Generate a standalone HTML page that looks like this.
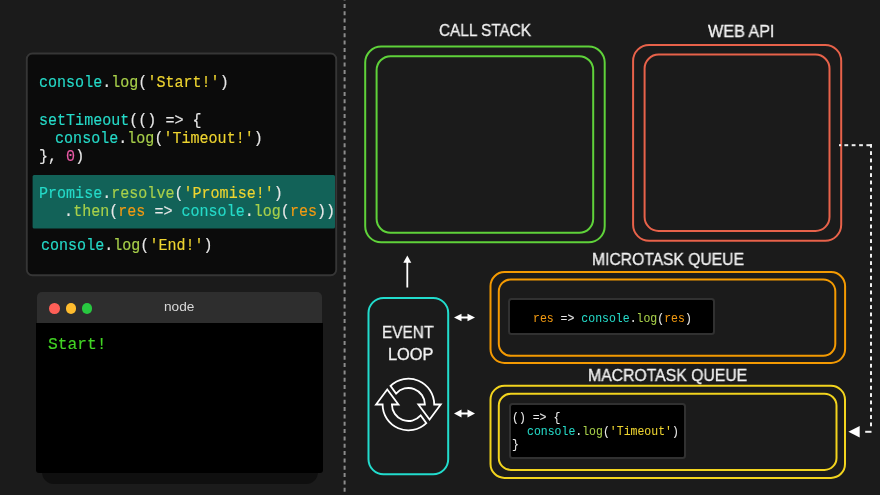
<!DOCTYPE html>
<html><head><meta charset="utf-8">
<style>
html,body{margin:0;padding:0;}
body{width:880px;height:495px;background:#1b1b1b;position:relative;overflow:hidden;font-family:"Liberation Sans",sans-serif;}
.abs{position:absolute;}
.mono{font-family:"Liberation Mono",monospace;white-space:pre;color:#e8e8e8;will-change:transform;-webkit-text-stroke-width:0.15px;}
.sans{font-family:"Liberation Sans",sans-serif;white-space:nowrap;will-change:transform;-webkit-text-stroke-width:0.3px;}
.t{color:#25dac8}.f{color:#a8d04a}.s{color:#eed430}.n{color:#ea5aa6}.r{color:#f29a12}
.term-shadow{left:42px;top:440px;width:275.5px;height:43.8px;background:#0f0f0f;border-radius:0 0 12px 12px;}
.term-bar{left:37.3px;top:291.8px;width:284.5px;height:31.2px;background:#2e2e2e;border-radius:5px 5px 0 0;}
.term-body{left:36.3px;top:322.9px;width:286.4px;height:149.7px;background:#000;border-radius:0 0 3px 3px;}
.dot{width:10.6px;height:10.6px;border-radius:50%;top:303.4px;}
.chip{background:#000;border:2px solid #313131;border-radius:3.5px;box-sizing:border-box;}
</style></head>
<body>
<svg class="abs" style="left:0;top:0" width="880" height="495">
  <line x1="344.6" y1="-3.4" x2="344.6" y2="495" stroke="#8c8c8c" stroke-width="2" stroke-dasharray="4 3.33"/>
</svg>
<svg class="abs" style="left:0;top:0" width="880" height="495">
  <rect x="26.8" y="53.5" width="309.4" height="221.8" rx="5.5" fill="#0b0b0b" stroke="#363636" stroke-width="1.9"/>
  <rect x="32.6" y="175" width="302.4" height="53.6" rx="1.5" fill="#126258"/>
</svg>
<div class="abs mono" style="left:38.9px;top:74.16px;font-size:15.05px;line-height:18.06px;transform:scaleY(1.12);transform-origin:0 13.04px;"><span class="t">console</span>.<span class="f">log</span>(<span class="s">'Start!'</span>)</div>
<div class="abs mono" style="left:38.9px;top:111.86px;font-size:15.05px;line-height:18.06px;transform:scaleY(1.12);transform-origin:0 13.04px;"><span class="t">setTimeout</span>(() =&gt; {</div>
<div class="abs mono" style="left:37.0px;top:129.86px;font-size:15.05px;line-height:18.06px;transform:scaleY(1.12);transform-origin:0 13.04px;">  <span class="t">console</span>.<span class="f">log</span>(<span class="s">'Timeout!'</span>)</div>
<div class="abs mono" style="left:38.9px;top:147.66px;font-size:15.05px;line-height:18.06px;transform:scaleY(1.12);transform-origin:0 13.04px;">}, <span class="n">0</span>)</div>
<div class="abs mono" style="left:38.9px;top:184.96px;font-size:15.05px;line-height:18.06px;transform:scaleY(1.12);transform-origin:0 13.04px;"><span class="t">Promise</span>.<span class="f">resolve</span>(<span class="s">'Promise!'</span>)</div>
<div class="abs mono" style="left:37.0px;top:202.86px;font-size:15.05px;line-height:18.06px;transform:scaleY(1.12);transform-origin:0 13.04px;">   .<span class="f">then</span>(<span class="r">res</span> =&gt; <span class="t">console</span>.<span class="f">log</span>(<span class="r">res</span>))</div>
<div class="abs mono" style="left:41.4px;top:236.86px;font-size:15.05px;line-height:18.06px;transform:scaleY(1.12);transform-origin:0 13.04px;"><span class="t">console</span>.<span class="f">log</span>(<span class="s">'End!'</span>)</div>

<div class="abs term-shadow"></div>
<div class="abs term-bar"></div>
<div class="abs term-body"></div>
<div class="abs dot" style="left:49.4px;background:#fe5f57"></div>
<div class="abs dot" style="left:65.6px;background:#febc2e"></div>
<div class="abs dot" style="left:81.7px;background:#28c840"></div>
<div class="abs mono" style="left:48.2px;top:334.70px;font-size:16.27px;line-height:19.52px;transform:scaleY(1.05);transform-origin:0 14.10px;color:#42d424;">Start!</div>

<svg class="abs" style="left:0;top:0" width="880" height="495">
  <rect x="365.2" y="46.5" width="239.5" height="195.8" rx="16" fill="none" stroke="#5fd23a" stroke-width="2"/>
  <rect x="376.6" y="56.2" width="216.6" height="176.6" rx="14" fill="none" stroke="#5fd23a" stroke-width="2"/>
  <rect x="633.1" y="44.9" width="208.1" height="195.9" rx="16" fill="none" stroke="#e8624a" stroke-width="2"/>
  <rect x="644.6" y="54.6" width="184.9" height="176.4" rx="14" fill="none" stroke="#e8624a" stroke-width="2"/>
  <rect x="490.5" y="272.1" width="354.6" height="90.9" rx="14" fill="none" stroke="#f49a02" stroke-width="2"/>
  <rect x="498.8" y="279.4" width="336.5" height="76.3" rx="12" fill="none" stroke="#f49a02" stroke-width="2"/>
  <rect x="490.5" y="385.8" width="354.5" height="92.1" rx="14" fill="none" stroke="#f2d41e" stroke-width="2"/>
  <rect x="498.8" y="393.8" width="337.7" height="76.1" rx="12" fill="none" stroke="#f2d41e" stroke-width="2"/>
  <rect x="368.5" y="298" width="79.7" height="176.3" rx="15" fill="none" stroke="#22dccd" stroke-width="2"/>
  <line x1="407.3" y1="262" x2="407.3" y2="287.5" stroke="#fff" stroke-width="1.8"/>
  <polygon points="407.3,255.6 403.3,262.7 411.3,262.7" fill="#fff"/>
  <g fill="#fff">
    <rect x="460" y="316.5" width="9" height="2"/>
    <polygon points="454,317.5 461.5,313.7 461.5,321.3"/>
    <polygon points="475,317.5 467.5,313.7 467.5,321.3"/>
    <rect x="460" y="412.5" width="9" height="2"/>
    <polygon points="454,413.5 461.5,409.6 461.5,417.4"/>
    <polygon points="475,413.5 467.5,409.6 467.5,417.4"/>
  </g>
  <g fill="none" stroke="#fff" stroke-width="1.8" stroke-linejoin="miter">
    <path d="M390.5,385.9 A25.8,25.8 0 0 1 434.2,404.5 L440.75,404.5 L429.55,419.5 L418.35,404.5 L424.9,404.5 A16.5,16.5 0 0 0 396.06,393.55 Z"/>
    <path d="M426.3,423.1 A25.8,25.8 0 0 1 382.6,404.5 L376.05,404.5 L387.25,389.5 L398.45,404.5 L391.9,404.5 A16.5,16.5 0 0 0 420.74,415.45 Z"/>
  </g>
<g fill="#f0f0f0"><rect x="839" y="144.2" width="2.10" height="2"/><rect x="844.4" y="144.2" width="3.80" height="2"/><rect x="851.7" y="144.2" width="3.80" height="2"/><rect x="859.1" y="144.2" width="3.80" height="2"/><rect x="866.4" y="144.2" width="5.60" height="2"/><rect x="870" y="144.2" width="2" height="3.5"/><rect x="870" y="151.20" width="2" height="3.8"/><rect x="870" y="158.53" width="2" height="3.8"/><rect x="870" y="165.86" width="2" height="3.8"/><rect x="870" y="173.20" width="2" height="3.8"/><rect x="870" y="180.53" width="2" height="3.8"/><rect x="870" y="187.86" width="2" height="3.8"/><rect x="870" y="195.19" width="2" height="3.8"/><rect x="870" y="202.52" width="2" height="3.8"/><rect x="870" y="209.86" width="2" height="3.8"/><rect x="870" y="217.19" width="2" height="3.8"/><rect x="870" y="224.52" width="2" height="3.8"/><rect x="870" y="231.85" width="2" height="3.8"/><rect x="870" y="239.18" width="2" height="3.8"/><rect x="870" y="246.52" width="2" height="3.8"/><rect x="870" y="253.85" width="2" height="3.8"/><rect x="870" y="261.18" width="2" height="3.8"/><rect x="870" y="268.51" width="2" height="3.8"/><rect x="870" y="275.84" width="2" height="3.8"/><rect x="870" y="283.18" width="2" height="3.8"/><rect x="870" y="290.51" width="2" height="3.8"/><rect x="870" y="297.84" width="2" height="3.8"/><rect x="870" y="305.17" width="2" height="3.8"/><rect x="870" y="312.50" width="2" height="3.8"/><rect x="870" y="319.84" width="2" height="3.8"/><rect x="870" y="327.17" width="2" height="3.8"/><rect x="870" y="334.50" width="2" height="3.8"/><rect x="870" y="341.83" width="2" height="3.8"/><rect x="870" y="349.16" width="2" height="3.8"/><rect x="870" y="356.50" width="2" height="3.8"/><rect x="870" y="363.83" width="2" height="3.8"/><rect x="870" y="371.16" width="2" height="3.8"/><rect x="870" y="378.49" width="2" height="3.8"/><rect x="870" y="385.82" width="2" height="3.8"/><rect x="870" y="393.16" width="2" height="3.8"/><rect x="870" y="400.49" width="2" height="3.8"/><rect x="870" y="407.82" width="2" height="3.8"/><rect x="870" y="415.15" width="2" height="3.8"/><rect x="870" y="422.48" width="2" height="3.8"/><rect x="865.2" y="430.8" width="6.3" height="2"/></g>
  <polygon points="848.4,431.8 859.7,426 859.7,437.6" fill="#fff"/>
</svg>
<div class="abs chip" style="left:508.2px;top:298.3px;width:207px;height:37.1px;"></div>
<div class="abs chip" style="left:508.5px;top:403.2px;width:177px;height:56.2px;"></div>
<div class="abs mono" style="left:533.3px;top:312.13px;font-size:11.5px;line-height:13.8px;transform:scaleY(1.12);transform-origin:0 9.97px;-webkit-text-stroke-width:0.05px;"><span class="r">res</span> =&gt; <span class="t">console</span>.<span class="f">log</span>(<span class="r">res</span>)</div>
<div class="abs mono" style="left:511.5px;top:411.43px;font-size:11.5px;line-height:13.8px;transform:scaleY(1.12);transform-origin:0 9.97px;-webkit-text-stroke-width:0.05px;">() =&gt; {</div>
<div class="abs mono" style="left:527.3px;top:425.43px;font-size:11.5px;line-height:13.8px;transform:scaleY(1.12);transform-origin:0 9.97px;-webkit-text-stroke-width:0.05px;"><span class="t">console</span>.<span class="f">log</span>(<span class="s">'Timeout'</span>)</div>
<div class="abs mono" style="left:511.5px;top:437.53px;font-size:11.5px;line-height:13.8px;transform:scaleY(1.12);transform-origin:0 9.97px;-webkit-text-stroke-width:0.05px;">}</div>

<div class="abs sans" style="left:438.8px;top:20.28px;font-size:16.4px;line-height:20px;color:#f2f2f2;transform:scaleX(0.935);transform-origin:0 0;">CALL STACK</div>
<div class="abs sans" style="left:708.0px;top:20.58px;font-size:16.4px;line-height:20px;color:#f2f2f2;transform:scaleX(0.986);transform-origin:0 0;">WEB API</div>
<div class="abs sans" style="left:591.5px;top:248.98px;font-size:16.4px;line-height:20px;color:#f2f2f2;transform:scaleX(0.955);transform-origin:0 0;">MICROTASK QUEUE</div>
<div class="abs sans" style="left:588.0px;top:365.48px;font-size:16.4px;line-height:20px;color:#f2f2f2;transform:scaleX(0.962);transform-origin:0 0;">MACROTASK QUEUE</div>
<div class="abs sans" style="left:382.3px;top:322.28px;font-size:16.4px;line-height:20px;color:#f2f2f2;transform:scaleX(0.938);transform-origin:0 0;">EVENT</div>
<div class="abs sans" style="left:387.7px;top:344.28px;font-size:16.4px;line-height:20px;color:#f2f2f2;transform:scaleX(1.0);transform-origin:0 0;">LOOP</div>
<div class="abs sans" style="left:163.6px;top:296.70px;font-size:13.0px;line-height:20px;color:#d8d8d8;transform:scaleX(1.05);transform-origin:0 0;-webkit-text-stroke-width:0;">node</div>

</body></html>
